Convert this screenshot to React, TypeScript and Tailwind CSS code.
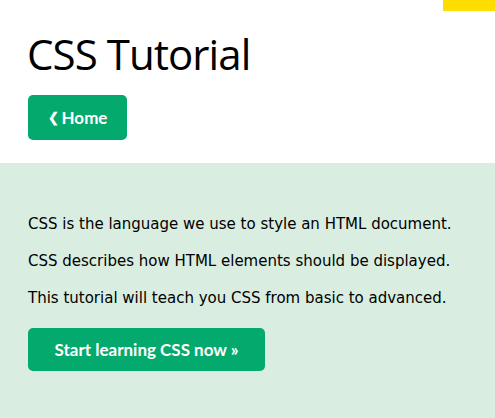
export default function App() {
  return (
    <div className="w-[495px] h-[418px] overflow-hidden bg-white flex flex-col">
      <div className="relative flex flex-col px-[28px] pt-[26px] h-[163px] shrink-0">
        <div className="absolute top-0 right-0 w-[52px] h-[11px] bg-[#ffdd00]" />
        <h1 className="text-[42px] leading-[56px] text-black font-['Open_Sans',sans-serif] font-normal tracking-[-0.9px] ml-[-1px]">CSS Tutorial</h1>
        <div className="mt-[13px]">
          <button className="w-[99px] h-[45px] rounded-[5px] bg-[#04aa6d] text-white font-['Lato',sans-serif] font-bold text-[17px] flex items-center justify-center">
            <span className="mr-[3px] text-[13px]">❮</span>Home
          </button>
        </div>
      </div>
      <div className="flex-1 bg-[#d9eee1] px-[28px] pt-[50px] flex flex-col font-['DejaVu_Sans',sans-serif] text-[15px] text-black">
        <p className="leading-[22px]">CSS is the language we use to style an HTML document.</p>
        <p className="leading-[22px] mt-[15px]">CSS describes how HTML elements should be displayed.</p>
        <p className="leading-[22px] mt-[15px]">This tutorial will teach you CSS from basic to advanced.</p>
        <div className="mt-[19px]">
          <button className="w-[237px] h-[43px] rounded-[5px] bg-[#04aa6d] text-white font-['Lato',sans-serif] font-bold text-[17px] flex items-center justify-center">
            Start learning CSS now »
          </button>
        </div>
      </div>
    </div>
  );
}
